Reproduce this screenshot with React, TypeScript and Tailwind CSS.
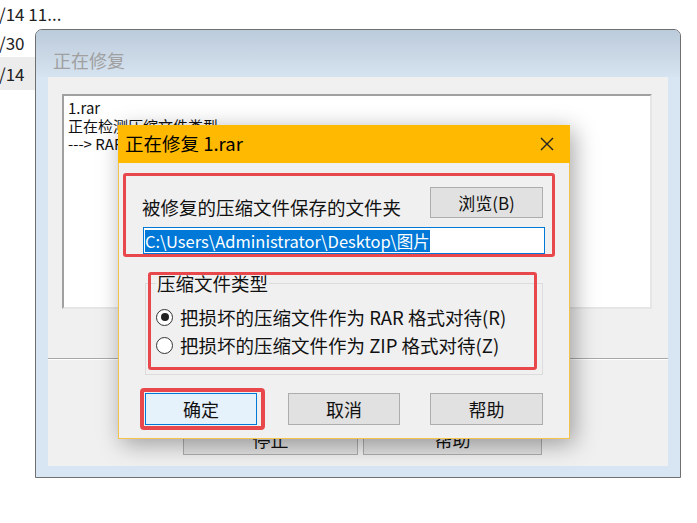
import React from 'react';

function Radio({ checked, label }: { checked?: boolean; label: string }) {
  return (
    <div className="flex h-[28px] items-center gap-[7px]">
      <span className="flex h-[17px] w-[17px] items-center justify-center rounded-full border border-[#333] bg-white">
        {checked && <span className="h-[8px] w-[8px] rounded-full bg-[#222]" />}
      </span>
      <span className="text-[18.5px] leading-[22px] text-[#111]">{label}</span>
    </div>
  );
}

function WinButton({ label, width, primary }: { label: string; width: string; primary?: boolean }) {
  return (
    <div
      className={`flex h-[32px] items-center justify-center border text-[18px] text-[#111] ${width} ${
        primary ? 'border-[#0078d7] bg-[#e5f1fb]' : 'border-[#adadad] bg-[#e1e1e1]'
      }`}
    >
      {label}
    </div>
  );
}

function CloseIcon() {
  return (
    <svg width="16" height="16" viewBox="0 0 16 16">
      <path d="M2 2 L14 14 M14 2 L2 14" stroke="#222" strokeWidth="1.4" fill="none" />
    </svg>
  );
}

export default function App() {
  return (
    <div className="relative h-[523px] w-[697px] overflow-hidden bg-white font-['Noto_Sans_CJK_SC',sans-serif]">
      {/* list rows behind the windows */}
      <div className="flex w-[140px] flex-col text-[17px] text-[#222]">
        <div className="flex h-[28px] items-center -ml-[1px]">/14 11...</div>
        <div className="flex h-[29px] items-center -ml-[1px]">/30</div>
        <div className="flex h-[33px] items-center bg-[#ececec] -ml-[1px]">/14</div>
      </div>

      {/* back window */}
      <div className="absolute left-[35px] top-[29px] flex h-[449px] w-[646px] flex-col rounded-t-[7px] border border-[#6f6f6f] bg-[#d8e5f2]">
        <div className="flex h-[47px] items-end rounded-t-[6px] bg-gradient-to-b from-[#bccbdb] to-[#d6e3f0] pb-[5px] pl-[17px] text-[18px] leading-[24px] text-[#a0a0a0]">
          正在修复
        </div>
        <div className="mx-[12px] flex h-[389px] flex-col bg-[#f0f0f0]">
          <div className="ml-[14px] mt-[17px] h-[215px] w-[590px] border-2 border-[#a0a0a0] border-b-[#e6e6e6] border-r-[#e6e6e6] bg-white pl-[4px] pt-[3px] text-[15px] leading-[18px] text-[#111]">
            <div>1.rar</div>
            <div>正在检测压缩文件类型</div>
            <div>---&gt; RAR 压缩文件</div>
          </div>
          <div className="mt-[49px] h-px bg-[#a8a8a8]" />
          <div className="h-px bg-white" />
          <div className="mt-[63px] flex gap-[5px] pl-[135px]">
            <WinButton label="停止" width="w-[175px]" />
            <WinButton label="帮助" width="w-[179px]" />
          </div>
        </div>
      </div>

      {/* front dialog */}
      <div className="absolute left-[118px] top-[125px] flex h-[314px] w-[452px] flex-col bg-[#f4c34c] shadow-[4px_5px_22px_rgba(0,0,0,0.35)]">
        <div className="flex h-[38px] items-center justify-between bg-[#ffb900] pl-[7px] pr-[15px] text-[18.5px] text-black">
          <span>正在修复 1.rar</span>
          <CloseIcon />
        </div>
        <div className="mx-px mb-px flex flex-1 flex-col bg-[#f0f0f0]">
          {/* highlighted folder section */}
          <div className="ml-[4px] mt-[10px] flex h-[84px] w-[432px] flex-col rounded-[3px] border-[3px] border-[#e8474c]">
            <div className="flex items-end justify-between pl-[16px] pr-[9px]">
              <span className="text-[18.5px] leading-[22px] text-[#111]">被修复的压缩文件保存的文件夹</span>
              <div className="mt-[11px] flex h-[31px] w-[113px] items-center justify-center border border-[#adadad] bg-[#e1e1e1] text-[17px] text-[#111]">
                浏览(B)
              </div>
            </div>
            <div className="ml-[17px] mt-[9px] flex h-[27px] w-[402px] items-center border border-[#0078d7] bg-white pl-px">
              <span className="bg-[#0078d7] text-[16.5px] leading-[22px] text-white">C:\Users\Administrator\Desktop\图片</span>
            </div>
          </div>

          {/* archive type group */}
          <div className="relative ml-[26px] mt-[26px] h-[92px] w-[398px] border border-[#dcdcdc]">
            <span className="absolute -top-[12px] left-[10px] bg-[#f0f0f0] px-px text-[18.5px] leading-[22px] text-[#111]">
              压缩文件类型
            </span>
            <div className="flex flex-col pl-[10px] pt-[19px]">
              <Radio checked label="把损坏的压缩文件作为 RAR 格式对待(R)" />
              <Radio label="把损坏的压缩文件作为 ZIP 格式对待(Z)" />
            </div>
            <div className="absolute -top-[12px] left-[2px] h-[98px] w-[389px] rounded-[3px] border-[3px] border-[#e8474c]" />
          </div>

          {/* buttons */}
          <div className="mt-[18px] flex pl-[26px]">
            <div className="relative">
              <WinButton label="确定" width="w-[112px]" primary />
              <div className="absolute -bottom-[5px] -left-[5px] -right-[8px] -top-[5px] rounded-[4px] border-[4px] border-[#e8474c]" />
            </div>
            <div className="ml-[31px]">
              <WinButton label="取消" width="w-[112px]" />
            </div>
            <div className="ml-[30px]">
              <WinButton label="帮助" width="w-[113px]" />
            </div>
          </div>
        </div>
      </div>
    </div>
  );
}
